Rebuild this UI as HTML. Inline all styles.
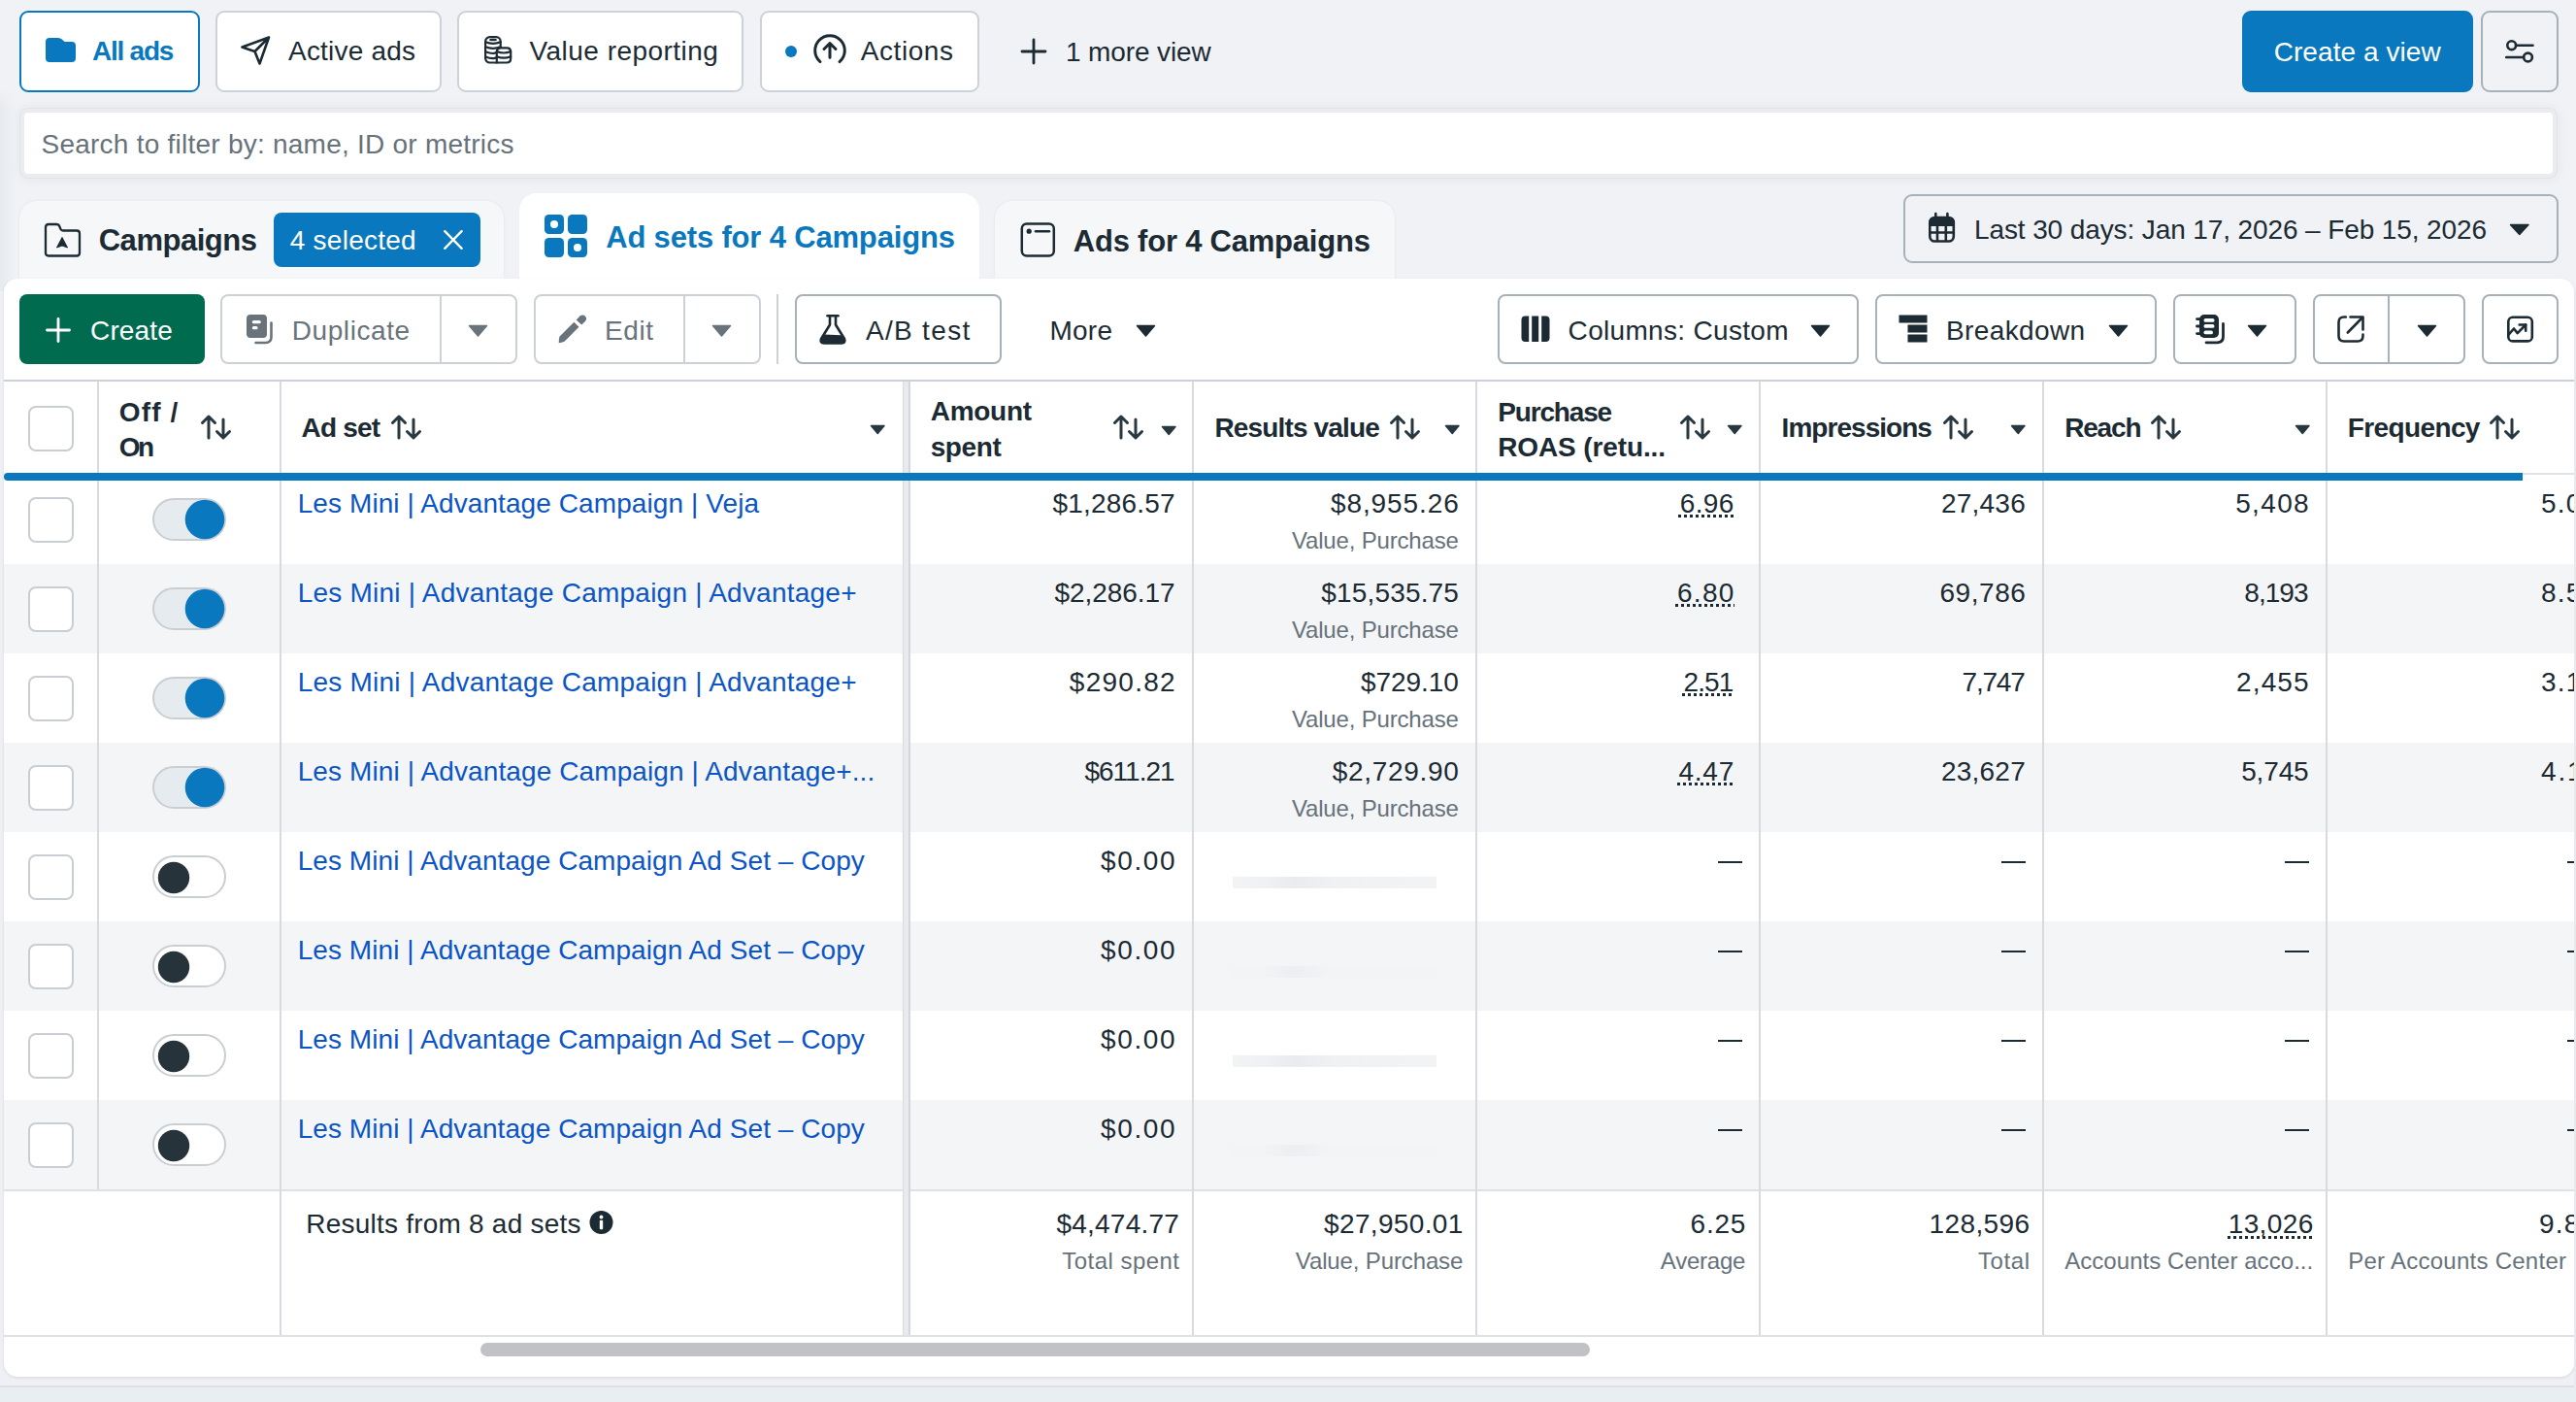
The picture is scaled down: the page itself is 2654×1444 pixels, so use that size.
<!DOCTYPE html><html><head><meta charset="utf-8"><style>
html,body{margin:0;padding:0;}
body{width:2654px;height:1444px;overflow:hidden;position:relative;background:#f0f2f5;font-family:"Liberation Sans", sans-serif;}
.t{position:absolute;white-space:nowrap;}
.b{position:absolute;box-sizing:border-box;}
svg.b{overflow:visible;}
</style></head><body>
<div class="b" style="left:0px;top:92px;width:16px;height:208px;background:linear-gradient(to right, rgba(40,60,80,0.045), rgba(40,60,80,0));-webkit-mask-image:linear-gradient(to bottom, transparent 0, #000 20px);"></div>
<div class="b" style="left:0px;top:1429px;width:2654px;height:15px;background:#e8eef1;"></div>
<div class="b" style="left:20px;top:11px;width:186px;height:84px;background:#fff;border:2.5px solid #0a78be;border-radius:9px;"></div>
<div class="b" style="left:222px;top:11px;width:233px;height:84px;background:#fff;border:2px solid #ccd2d8;border-radius:9px;"></div>
<div class="b" style="left:471px;top:11px;width:295px;height:84px;background:#fff;border:2px solid #ccd2d8;border-radius:9px;"></div>
<div class="b" style="left:783px;top:11px;width:226px;height:84px;background:#fff;border:2px solid #ccd2d8;border-radius:9px;"></div>
<svg class="b" style="left:46px;top:38px" width="33" height="27" viewBox="0 0 33 27"><path d="M1 5 Q1 1 5 1 H14 Q17 1 19 3.5 L20.5 5 H28 Q32 5 32 9 V22 Q32 26 28 26 H5 Q1 26 1 22 Z" fill="#0a78be"/></svg>
<div class="t" style="top:38.6px;font-size:28px;line-height:28px;color:#0a78be;font-weight:700;letter-spacing:-1.24px;left:95.0px;">All ads</div>
<svg class="b" style="left:246px;top:35px" width="34" height="34" viewBox="0 0 34 34"><path d="M3.5 13.5 L31 3.5 L21.5 30.5 L16.5 18 Z M16.5 18 L31 3.5" fill="none" stroke="#1c2b33" stroke-width="2.6" stroke-linejoin="round" stroke-linecap="round"/></svg>
<div class="t" style="top:38.6px;font-size:28px;line-height:28px;color:#1c2b33;letter-spacing:0.20px;left:297.0px;">Active ads</div>
<svg class="b" style="left:498px;top:36px" width="30" height="30" viewBox="0 0 30 30"><g fill="none" stroke="#1c2b33" stroke-width="2.2" stroke-linecap="round"><rect x="2.1" y="2.2" width="15.6" height="26.3" rx="4.5"/><path d="M2.1 7.3 Q9.9 10.3 17.7 7.3 M2.1 12.3 Q9.9 15.3 17.7 12.3 M2.1 17.3 Q9.9 20.3 13.8 18 M2.1 22.5 Q9.9 25.5 13.8 23.2"/></g><ellipse cx="10" cy="5" rx="4" ry="1.2" fill="#1c2b33"/><g fill="none" stroke="#1c2b33" stroke-width="2.2" stroke-linecap="round"><path d="M13.8 28.5 V17.5 Q13.8 13.3 18 13.3 H24 Q28.2 13.3 28.2 17.5 V24.3 Q28.2 28.5 24 28.5 Z" fill="#fff"/><path d="M13.8 17 Q21 20 28.2 17 M13.8 22.2 Q21 25.2 28.2 22.2"/></g></svg>
<div class="t" style="top:38.6px;font-size:28px;line-height:28px;color:#1c2b33;letter-spacing:0.47px;left:545.5px;">Value reporting</div>
<svg class="b" style="left:808px;top:46px" width="14" height="14" viewBox="0 0 14 14"><circle cx="7" cy="7" r="6" fill="#0a78be"/></svg>
<svg class="b" style="left:837px;top:33px" width="36" height="36" viewBox="0 0 36 36"><g fill="none" stroke="#1c2b33" stroke-width="3" stroke-linecap="round" stroke-linejoin="round"><path d="M8 30.6 A15.3 15.3 0 1 1 28 30.6"/><path d="M18 26.2 V11.5 M12 17.5 L18 11.5 L24 17.5"/></g></svg>
<div class="t" style="top:38.6px;font-size:28px;line-height:28px;color:#1c2b33;letter-spacing:0.58px;left:886.7px;">Actions</div>
<svg class="b" style="left:1050px;top:38px" width="30" height="30" viewBox="0 0 30 30"><path d="M15 3 V27 M3 15 H27" stroke="#1c2b33" stroke-width="2.8" stroke-linecap="round"/></svg>
<div class="t" style="top:40.3px;font-size:28px;line-height:28px;color:#1c2b33;letter-spacing:-0.13px;left:1098.0px;">1 more view</div>
<div class="b" style="left:2310px;top:11px;width:238px;height:84px;background:#0a78be;border-radius:9px;"></div>
<div class="t" style="top:40.2px;font-size:28px;line-height:28px;color:#fff;letter-spacing:0.07px;left:2342.7px;">Create a view</div>
<div class="b" style="left:2556px;top:11px;width:80px;height:84px;border:2px solid #a7b1ba;border-radius:9px;"></div>
<svg class="b" style="left:2578px;top:40px" width="36" height="28" viewBox="0 0 36 28"><g fill="none" stroke="#1c2b33" stroke-width="2.6" stroke-linecap="round"><circle cx="9.7" cy="6.7" r="4.4"/><path d="M14.1 6.7 H31.5"/><circle cx="26.5" cy="19" r="4.4"/><path d="M4.2 19 H22.1"/></g></svg>
<div class="b" style="left:21px;top:112px;width:2613px;height:71px;background:#fff;border:4px solid #eaecef;border-radius:8px;box-shadow:0 0 0 1px #e0e3e7, 0 0 12px 2px rgba(40,60,80,0.05);"></div>
<div class="t" style="top:134.5px;font-size:28px;line-height:28px;color:#67727b;letter-spacing:0.24px;left:42.5px;">Search to filter by: name, ID or metrics</div>
<div class="b" style="left:20px;top:207px;width:499px;height:80px;background:#f6f7f9;border-radius:18px 18px 0 0;box-shadow:0 0 3px rgba(0,0,0,0.07);"></div>
<div class="b" style="left:535px;top:199px;width:474px;height:91px;background:#fff;border-radius:18px 18px 0 0;"></div>
<div class="b" style="left:1025px;top:207px;width:412px;height:80px;background:#f6f7f9;border-radius:18px 18px 0 0;box-shadow:0 0 3px rgba(0,0,0,0.07);"></div>
<svg class="b" style="left:44px;top:228px" width="40" height="38" viewBox="0 0 40 38"><g fill="none" stroke="#1c2b33" stroke-width="2.3" stroke-linejoin="round"><path d="M3 6 Q3 3 6 3 H14.5 Q16 3 17 4.5 L18.5 8 Q19.2 9.5 21 9.5 H35 Q38 9.5 38 12.5 V32.5 Q38 35.5 35 35.5 H6 Q3 35.5 3 32.5 Z"/></g><path d="M20 16.5 L25.5 27 L20 25 L14.5 27 Z" fill="#1c2b33" stroke="#1c2b33" stroke-width="1" stroke-linejoin="round"/></svg>
<div class="t" style="top:232.4px;font-size:31px;line-height:31px;color:#1c2b33;font-weight:700;letter-spacing:-0.47px;left:101.7px;">Campaigns</div>
<div class="b" style="left:282px;top:219px;width:213px;height:56px;background:#0a78be;border-radius:8px;"></div>
<div class="t" style="top:234.3px;font-size:28px;line-height:28px;color:#fff;letter-spacing:0.26px;left:298.7px;">4 selected</div>
<svg class="b" style="left:455px;top:236px" width="24" height="22" viewBox="0 0 24 22"><path d="M3.3 2.2 L20.6 19.8 M20.6 2.2 L3.3 19.8" stroke="#fff" stroke-width="2.4" stroke-linecap="round"/></svg>
<svg class="b" style="left:560px;top:220px" width="46" height="46" viewBox="0 0 46 46"><g fill="#0a78be"><rect x="1" y="1" width="20" height="20" rx="4.5"/><rect x="25" y="1" width="20" height="20" rx="4.5"/><rect x="1" y="25" width="20" height="20" rx="4.5"/><rect x="25" y="25" width="20" height="20" rx="4.5"/></g><circle cx="11" cy="11" r="4" fill="#fff"/><circle cx="35" cy="35" r="4" fill="#fff"/></svg>
<div class="t" style="top:228.6px;font-size:31px;line-height:31px;color:#0a78be;font-weight:700;letter-spacing:-0.17px;left:624.2px;">Ad sets for 4 Campaigns</div>
<svg class="b" style="left:1050px;top:228px" width="38" height="38" viewBox="0 0 38 38"><g fill="none" stroke="#1c2b33" stroke-width="2.5"><rect x="2.8" y="2.5" width="33" height="33" rx="5"/><path d="M17 10.2 H31" stroke-linecap="round"/></g><circle cx="10.2" cy="10.2" r="2.6" fill="#1c2b33"/></svg>
<div class="t" style="top:232.8px;font-size:31px;line-height:31px;color:#1c2b33;font-weight:700;letter-spacing:-0.22px;left:1105.8px;">Ads for 4 Campaigns</div>
<div class="b" style="left:1961px;top:200px;width:675px;height:71px;border:2px solid #a7b1ba;border-radius:9px;"></div>
<svg class="b" style="left:1985px;top:218px" width="30" height="32" viewBox="0 0 30 32"><g fill="none" stroke="#1c2b33" stroke-width="2.6" stroke-linecap="round"><rect x="3.3" y="6" width="24.5" height="24.5" rx="5"/><path d="M9.3 2 V6 M21.4 2 V6"/><path d="M3.3 13.8 H27.8 M3.3 21.5 H27.8 M11 13.8 V30.5 M19.8 13.8 V30.5" stroke-linecap="butt"/></g><rect x="3.3" y="6" width="24.5" height="7.8" fill="#1c2b33" rx="3"/></svg>
<div class="t" style="top:222.8px;font-size:28px;line-height:28px;color:#1c2b33;letter-spacing:-0.11px;left:2034.0px;">Last 30 days: Jan 17, 2026 – Feb 15, 2026</div>
<svg class="b" style="left:2584.75px;top:230.3px" width="21.5" height="13" viewBox="0 0 21.5 13"><path d="M1.5 1.5 H20.0 L10.75 11.5 Z" fill="#1c2b33" stroke="#1c2b33" stroke-width="1.5" stroke-linejoin="round"/></svg>
<div class="b" style="left:-20px;top:300px;width:2694px;height:1129px;background:#eef0f3;border-bottom:2px solid #dde0e4;border-radius:0 0 16px 16px;"></div>
<div class="b" style="left:4px;top:287px;width:2648px;height:1131px;background:#fff;border-radius:14px;box-shadow:0 1px 3px rgba(0,0,0,0.10);"></div>
<div class="b" style="left:20px;top:303px;width:191px;height:72px;background:#006b4e;border-radius:8px;"></div>
<svg class="b" style="left:46px;top:326px" width="28" height="28" viewBox="0 0 28 28"><path d="M14 2.5 V25.5 M2.5 14 H25.5" stroke="#fff" stroke-width="2.8" stroke-linecap="round"/></svg>
<div class="t" style="top:326.5px;font-size:28px;line-height:28px;color:#fff;letter-spacing:0.16px;left:93.0px;">Create</div>
<div class="b" style="left:227px;top:303px;width:306px;height:72px;border:2px solid #ccd1d7;border-radius:8px;background:#fff;"></div>
<div class="b" style="left:453px;top:303px;width:2px;height:72px;background:#ccd1d7;"></div>
<svg class="b" style="left:252px;top:322px" width="32" height="34" viewBox="0 0 32 34"><rect x="2" y="2" width="21" height="24" rx="4" fill="#69737b"/><rect x="7.8" y="8" width="9" height="3.3" rx="1.6" fill="#fff"/><rect x="7.8" y="14" width="5.8" height="3.3" rx="1.6" fill="#fff"/><path d="M27.5 10.5 V25 Q27.5 31 21.5 31 H11.5" fill="none" stroke="#69737b" stroke-width="2.6" stroke-linecap="round"/></svg>
<div class="t" style="top:326.5px;font-size:28px;line-height:28px;color:#69737b;letter-spacing:0.59px;left:300.7px;">Duplicate</div>
<svg class="b" style="left:482.1px;top:333.6px" width="21" height="13.5" viewBox="0 0 21 13.5"><path d="M1.5 1.5 H19.5 L10.5 12.0 Z" fill="#69737b" stroke="#69737b" stroke-width="1.5" stroke-linejoin="round"/></svg>
<div class="b" style="left:550px;top:303px;width:234px;height:72px;border:2px solid #ccd1d7;border-radius:8px;background:#fff;"></div>
<div class="b" style="left:704px;top:303px;width:2px;height:72px;background:#ccd1d7;"></div>
<svg class="b" style="left:573px;top:323px" width="34" height="34" viewBox="0 0 34 34"><path d="M18.4 8.7 L23.5 13.8 L8.5 28.8 Q5.5 30 2.7 30.2 Q2.6 27 3.4 23.7 Z" fill="#69737b"/><path d="M20.7 6.4 L24.5 2.6 Q27.5 0.3 30 2.8 Q32.3 5.3 29.9 7.9 L26.2 11.6 Z" fill="#69737b"/></svg>
<div class="t" style="top:326.5px;font-size:28px;line-height:28px;color:#69737b;letter-spacing:0.67px;left:622.9px;">Edit</div>
<svg class="b" style="left:733.3px;top:333.6px" width="21" height="13.5" viewBox="0 0 21 13.5"><path d="M1.5 1.5 H19.5 L10.5 12.0 Z" fill="#69737b" stroke="#69737b" stroke-width="1.5" stroke-linejoin="round"/></svg>
<div class="b" style="left:800px;top:303px;width:2px;height:72px;background:#ccd1d7;"></div>
<div class="b" style="left:819px;top:303px;width:213px;height:72px;border:2px solid #a7b1ba;border-radius:8px;background:#fff;"></div>
<svg class="b" style="left:842px;top:322px" width="32" height="34" viewBox="0 0 32 34"><g fill="none" stroke="#1c2b33" stroke-width="2.6" stroke-linecap="round" stroke-linejoin="round"><path d="M10.5 3.3 H21.5"/><path d="M13 3.5 V12.5 L4 27 Q2.5 31.5 7 31.5 H25 Q29.5 31.5 28 27 L19 12.5 V3.5"/></g><path d="M7.5 22.5 L24.5 23.2 L28.5 28.5 Q29 31.5 25 31.5 H7 Q3 31.5 3.8 28 Z" fill="#1c2b33"/></svg>
<div class="t" style="top:326.5px;font-size:28px;line-height:28px;color:#1c2b33;letter-spacing:1.33px;left:891.9px;">A/B test</div>
<div class="t" style="top:326.5px;font-size:28px;line-height:28px;color:#1c2b33;letter-spacing:0.19px;left:1081.6px;">More</div>
<svg class="b" style="left:1169.7px;top:333.6px" width="21" height="13.5" viewBox="0 0 21 13.5"><path d="M1.5 1.5 H19.5 L10.5 12.0 Z" fill="#1c2b33" stroke="#1c2b33" stroke-width="1.5" stroke-linejoin="round"/></svg>
<div class="b" style="left:1543px;top:303px;width:372px;height:72px;border:2px solid #a7b1ba;border-radius:8px;background:#fff;"></div>
<svg class="b" style="left:1566px;top:324px" width="32" height="30" viewBox="0 0 32 30"><rect x="1.5" y="1.5" width="29" height="26.5" rx="4" fill="#1c2b33"/><rect x="9.2" y="1" width="3" height="28" fill="#fff"/><rect x="19.2" y="1" width="3" height="28" fill="#fff"/></svg>
<div class="t" style="top:326.5px;font-size:28px;line-height:28px;color:#1c2b33;letter-spacing:0.32px;left:1615.6px;">Columns: Custom</div>
<svg class="b" style="left:1864.6px;top:333.6px" width="21" height="13.5" viewBox="0 0 21 13.5"><path d="M1.5 1.5 H19.5 L10.5 12.0 Z" fill="#1c2b33" stroke="#1c2b33" stroke-width="1.5" stroke-linejoin="round"/></svg>
<div class="b" style="left:1932px;top:303px;width:290px;height:72px;border:2px solid #a7b1ba;border-radius:8px;background:#fff;"></div>
<svg class="b" style="left:1956px;top:324px" width="30" height="30" viewBox="0 0 30 30"><g fill="#1c2b33"><rect x="0.5" y="0.5" width="29" height="8"/><rect x="9.5" y="10.5" width="20" height="8"/><rect x="9.5" y="20.5" width="20" height="8"/></g></svg>
<div class="t" style="top:326.5px;font-size:28px;line-height:28px;color:#1c2b33;letter-spacing:0.38px;left:2005.0px;">Breakdown</div>
<svg class="b" style="left:2171.7px;top:333.6px" width="21" height="13.5" viewBox="0 0 21 13.5"><path d="M1.5 1.5 H19.5 L10.5 12.0 Z" fill="#1c2b33" stroke="#1c2b33" stroke-width="1.5" stroke-linejoin="round"/></svg>
<div class="b" style="left:2239px;top:303px;width:127px;height:72px;border:2px solid #a7b1ba;border-radius:8px;background:#fff;"></div>
<svg class="b" style="left:2261px;top:322px" width="34" height="34" viewBox="0 0 34 34"><rect x="5" y="2" width="20" height="24" rx="5" fill="#1c2b33"/><g fill="#fff"><rect x="9.5" y="6" width="11" height="3.8" rx="1.9"/><rect x="9.5" y="12" width="11" height="3.8" rx="1.9"/><rect x="9.5" y="18.5" width="9.5" height="3.8" rx="1.9"/></g><g stroke="#1c2b33" stroke-width="2.8" stroke-linecap="round" fill="none"><path d="M2.5 6.6 H6 M2.5 14 H6 M2.5 21.6 H6"/><path d="M29.5 11.5 V24.5 Q29.5 30.8 23.2 30.8 H12"/></g></svg>
<svg class="b" style="left:2315.4px;top:334.2px" width="21" height="13.5" viewBox="0 0 21 13.5"><path d="M1.5 1.5 H19.5 L10.5 12.0 Z" fill="#1c2b33" stroke="#1c2b33" stroke-width="1.5" stroke-linejoin="round"/></svg>
<div class="b" style="left:2383px;top:303px;width:157px;height:72px;border:2px solid #a7b1ba;border-radius:8px;background:#fff;"></div>
<div class="b" style="left:2460px;top:303px;width:2px;height:72px;background:#a7b1ba;"></div>
<svg class="b" style="left:2406px;top:323px" width="32" height="32" viewBox="0 0 32 32"><g fill="none" stroke="#1c2b33" stroke-width="2.6" stroke-linecap="round" stroke-linejoin="round"><path d="M10.8 3.5 H9 Q3.5 3.5 3.5 9 V23 Q3.5 28.5 9 28.5 H23 Q28.5 28.5 28.5 23 V21.5"/><path d="M15.5 3.5 H28.5 V16.5"/><path d="M12.8 19.5 L27.5 4.5"/></g></svg>
<svg class="b" style="left:2489.5px;top:334.2px" width="21" height="13.5" viewBox="0 0 21 13.5"><path d="M1.5 1.5 H19.5 L10.5 12.0 Z" fill="#1c2b33" stroke="#1c2b33" stroke-width="1.5" stroke-linejoin="round"/></svg>
<div class="b" style="left:2557px;top:303px;width:79px;height:72px;border:2px solid #a7b1ba;border-radius:8px;background:#fff;"></div>
<svg class="b" style="left:2580px;top:323px" width="32" height="32" viewBox="0 0 32 32"><g fill="none" stroke="#1c2b33" stroke-width="2.6" stroke-linecap="round" stroke-linejoin="round"><rect x="4.3" y="3.8" width="24.5" height="24.6" rx="4.5"/><path d="M5 21.2 L10 15.5 L13.7 20.1 L22.2 11.5"/><path d="M15.7 11.5 H22.2 V17.8"/></g></svg>
<div class="b" style="left:4px;top:391px;width:2648px;height:2px;background:#cdd1d6;"></div>
<div class="b" style="left:4px;top:581px;width:2648px;height:92px;background:#f4f5f7;"></div>
<div class="b" style="left:4px;top:765px;width:2648px;height:92px;background:#f4f5f7;"></div>
<div class="b" style="left:4px;top:949px;width:2648px;height:92px;background:#f4f5f7;"></div>
<div class="b" style="left:4px;top:1133px;width:2648px;height:92px;background:#f4f5f7;"></div>
<div class="b" style="left:4px;top:1225px;width:2648px;height:2px;background:#dfe2e5;"></div>
<div class="b" style="left:4px;top:1375px;width:2648px;height:2px;background:#dfe2e5;"></div>
<div class="b" style="left:100px;top:393px;width:2px;height:832px;background:#d7dadf;"></div>
<div class="b" style="left:288px;top:393px;width:2px;height:982px;background:#d7dadf;"></div>
<div class="b" style="left:1228px;top:393px;width:2px;height:982px;background:#d7dadf;"></div>
<div class="b" style="left:1520px;top:393px;width:2px;height:982px;background:#d7dadf;"></div>
<div class="b" style="left:1812px;top:393px;width:2px;height:982px;background:#d7dadf;"></div>
<div class="b" style="left:2104px;top:393px;width:2px;height:982px;background:#d7dadf;"></div>
<div class="b" style="left:2396px;top:393px;width:2px;height:982px;background:#d7dadf;"></div>
<div class="b" style="left:930px;top:393px;width:8px;height:982px;background:#e8eaed;"></div>
<div class="b" style="left:930px;top:393px;width:1px;height:982px;background:#d7dadf;"></div>
<div class="b" style="left:936px;top:393px;width:2px;height:982px;background:#d3d6da;"></div>
<div class="b" style="left:2599px;top:487px;width:53px;height:2px;background:#dfe2e6;"></div>
<div class="b" style="left:4px;top:487px;width:2595px;height:8px;background:#0a78be;border-radius:4px 0 0 4px;"></div>
<div class="b" style="left:28.5px;top:417.5px;width:47.0px;height:47.0px;background:#fff;border:2px solid #c9ced4;border-radius:8px;"></div>
<div class="t" style="top:410.8px;font-size:28px;line-height:28px;color:#1c2b33;font-weight:700;letter-spacing:1.18px;left:122.7px;">Off /</div>
<div class="t" style="top:447.1px;font-size:28px;line-height:28px;color:#1c2b33;font-weight:700;letter-spacing:-2.42px;left:122.7px;">On</div>
<svg class="b" style="left:207px;top:427px" width="32" height="26" viewBox="0 0 32 26"><g fill="none" stroke="#283841" stroke-width="3" stroke-linecap="round" stroke-linejoin="round"><path d="M8 24 V2 M1.5 8.5 L8 2 L14.5 8.5"/><path d="M23 5 V24 M16.5 17.5 L23 24 L29.5 17.5"/></g></svg>
<div class="t" style="top:427.3px;font-size:28px;line-height:28px;color:#1c2b33;font-weight:700;letter-spacing:-0.83px;left:310.6px;">Ad set</div>
<svg class="b" style="left:402.5px;top:427px" width="32" height="26" viewBox="0 0 32 26"><g fill="none" stroke="#283841" stroke-width="3" stroke-linecap="round" stroke-linejoin="round"><path d="M8 24 V2 M1.5 8.5 L8 2 L14.5 8.5"/><path d="M23 5 V24 M16.5 17.5 L23 24 L29.5 17.5"/></g></svg>
<svg class="b" style="left:895.55px;top:436.8px" width="16.5" height="11" viewBox="0 0 16.5 11"><path d="M1.5 1.5 H15.0 L8.25 9.5 Z" fill="#283841" stroke="#283841" stroke-width="1.5" stroke-linejoin="round"/></svg>
<div class="t" style="top:410.2px;font-size:28px;line-height:28px;color:#1c2b33;font-weight:700;letter-spacing:-0.28px;left:958.7px;">Amount</div>
<div class="t" style="top:446.7px;font-size:28px;line-height:28px;color:#1c2b33;font-weight:700;letter-spacing:-0.41px;left:958.7px;">spent</div>
<svg class="b" style="left:1146.5px;top:427px" width="32" height="26" viewBox="0 0 32 26"><g fill="none" stroke="#283841" stroke-width="3" stroke-linecap="round" stroke-linejoin="round"><path d="M8 24 V2 M1.5 8.5 L8 2 L14.5 8.5"/><path d="M23 5 V24 M16.5 17.5 L23 24 L29.5 17.5"/></g></svg>
<svg class="b" style="left:1195.75px;top:437.5px" width="16.5" height="11" viewBox="0 0 16.5 11"><path d="M1.5 1.5 H15.0 L8.25 9.5 Z" fill="#283841" stroke="#283841" stroke-width="1.5" stroke-linejoin="round"/></svg>
<div class="t" style="top:427.1px;font-size:28px;line-height:28px;color:#1c2b33;font-weight:700;letter-spacing:-0.86px;left:1251.5px;">Results value</div>
<svg class="b" style="left:1431.5px;top:427px" width="32" height="26" viewBox="0 0 32 26"><g fill="none" stroke="#283841" stroke-width="3" stroke-linecap="round" stroke-linejoin="round"><path d="M8 24 V2 M1.5 8.5 L8 2 L14.5 8.5"/><path d="M23 5 V24 M16.5 17.5 L23 24 L29.5 17.5"/></g></svg>
<svg class="b" style="left:1487.65px;top:436.8px" width="16.5" height="11" viewBox="0 0 16.5 11"><path d="M1.5 1.5 H15.0 L8.25 9.5 Z" fill="#283841" stroke="#283841" stroke-width="1.5" stroke-linejoin="round"/></svg>
<div class="t" style="top:410.6px;font-size:28px;line-height:28px;color:#1c2b33;font-weight:700;letter-spacing:-1.16px;left:1543.2px;">Purchase</div>
<div class="t" style="top:447.0px;font-size:28px;line-height:28px;color:#1c2b33;font-weight:700;letter-spacing:-0.12px;left:1543.2px;">ROAS (retu...</div>
<svg class="b" style="left:1731px;top:427px" width="32" height="26" viewBox="0 0 32 26"><g fill="none" stroke="#283841" stroke-width="3" stroke-linecap="round" stroke-linejoin="round"><path d="M8 24 V2 M1.5 8.5 L8 2 L14.5 8.5"/><path d="M23 5 V24 M16.5 17.5 L23 24 L29.5 17.5"/></g></svg>
<svg class="b" style="left:1779.15px;top:436.8px" width="16.5" height="11" viewBox="0 0 16.5 11"><path d="M1.5 1.5 H15.0 L8.25 9.5 Z" fill="#283841" stroke="#283841" stroke-width="1.5" stroke-linejoin="round"/></svg>
<div class="t" style="top:427.1px;font-size:28px;line-height:28px;color:#1c2b33;font-weight:700;letter-spacing:-0.96px;left:1835.6px;">Impressions</div>
<svg class="b" style="left:2001.5px;top:427px" width="32" height="26" viewBox="0 0 32 26"><g fill="none" stroke="#283841" stroke-width="3" stroke-linecap="round" stroke-linejoin="round"><path d="M8 24 V2 M1.5 8.5 L8 2 L14.5 8.5"/><path d="M23 5 V24 M16.5 17.5 L23 24 L29.5 17.5"/></g></svg>
<svg class="b" style="left:2071.25px;top:436.8px" width="16.5" height="11" viewBox="0 0 16.5 11"><path d="M1.5 1.5 H15.0 L8.25 9.5 Z" fill="#283841" stroke="#283841" stroke-width="1.5" stroke-linejoin="round"/></svg>
<div class="t" style="top:427.1px;font-size:28px;line-height:28px;color:#1c2b33;font-weight:700;letter-spacing:-1.18px;left:2127.2px;">Reach</div>
<svg class="b" style="left:2216px;top:427px" width="32" height="26" viewBox="0 0 32 26"><g fill="none" stroke="#283841" stroke-width="3" stroke-linecap="round" stroke-linejoin="round"><path d="M8 24 V2 M1.5 8.5 L8 2 L14.5 8.5"/><path d="M23 5 V24 M16.5 17.5 L23 24 L29.5 17.5"/></g></svg>
<svg class="b" style="left:2363.75px;top:436.8px" width="16.5" height="11" viewBox="0 0 16.5 11"><path d="M1.5 1.5 H15.0 L8.25 9.5 Z" fill="#283841" stroke="#283841" stroke-width="1.5" stroke-linejoin="round"/></svg>
<div class="t" style="top:427.1px;font-size:28px;line-height:28px;color:#1c2b33;font-weight:700;letter-spacing:-0.62px;left:2418.8px;">Frequency</div>
<svg class="b" style="left:2565px;top:427px" width="32" height="26" viewBox="0 0 32 26"><g fill="none" stroke="#283841" stroke-width="3" stroke-linecap="round" stroke-linejoin="round"><path d="M8 24 V2 M1.5 8.5 L8 2 L14.5 8.5"/><path d="M23 5 V24 M16.5 17.5 L23 24 L29.5 17.5"/></g></svg>
<div class="b" style="left:28.5px;top:511.5px;width:47.0px;height:47.0px;background:#fff;border:2px solid #c9ced4;border-radius:8px;"></div>
<div class="b" style="left:157px;top:513px;width:76px;height:44px;background:#e6ebef;border:2px solid #c9ced3;border-radius:22px;"></div>
<svg class="b" style="left:190px;top:514px" width="42" height="42" viewBox="0 0 42 42"><circle cx="21" cy="21" r="20.3" fill="#0a78be"/></svg>
<div class="t" style="top:504.8px;font-size:28px;line-height:28px;color:#0b55c6;letter-spacing:0.09px;left:306.7px;">Les Mini | Advantage Campaign | Veja</div>
<div class="t" style="top:504.8px;font-size:28px;line-height:28px;color:#1c2b33;letter-spacing:0.20px;right:1443.2px;">$1,286.57</div>
<div class="t" style="top:504.8px;font-size:28px;line-height:28px;color:#1c2b33;letter-spacing:0.93px;right:1150.2px;">$8,955.26</div>
<div class="t" style="top:545.1px;font-size:24px;line-height:24px;color:#67727b;letter-spacing:-0.17px;right:1151.3px;">Value, Purchase</div>
<div class="t" style="top:504.8px;font-size:28px;line-height:28px;color:#1c2b33;letter-spacing:0.31px;right:867.4px;">6.96</div>
<div class="b" style="left:1729px;top:530px;width:58px;height:3px;background-image:linear-gradient(to right,#1c2b33 50%,transparent 50%);background-size:6px 3px;"></div>
<div class="t" style="top:504.8px;font-size:28px;line-height:28px;color:#1c2b33;letter-spacing:0.24px;right:567.0px;">27,436</div>
<div class="t" style="top:504.8px;font-size:28px;line-height:28px;color:#1c2b33;letter-spacing:1.36px;right:274.0px;">5,408</div>
<div class="t" style="top:504.8px;font-size:28px;line-height:28px;color:#1c2b33;letter-spacing:1.18px;right:-23.2px;">5.07</div>
<div class="b" style="left:28.5px;top:603.5px;width:47.0px;height:47.0px;background:#fff;border:2px solid #c9ced4;border-radius:8px;"></div>
<div class="b" style="left:157px;top:605px;width:76px;height:44px;background:#e6ebef;border:2px solid #c9ced3;border-radius:22px;"></div>
<svg class="b" style="left:190px;top:606px" width="42" height="42" viewBox="0 0 42 42"><circle cx="21" cy="21" r="20.3" fill="#0a78be"/></svg>
<div class="t" style="top:596.8px;font-size:28px;line-height:28px;color:#0b55c6;letter-spacing:0.23px;left:306.7px;">Les Mini | Advantage Campaign | Advantage+</div>
<div class="t" style="top:596.8px;font-size:28px;line-height:28px;color:#1c2b33;letter-spacing:-0.04px;right:1443.4px;">$2,286.17</div>
<div class="t" style="top:596.8px;font-size:28px;line-height:28px;color:#1c2b33;letter-spacing:0.17px;right:1150.9px;">$15,535.75</div>
<div class="t" style="top:637.1px;font-size:24px;line-height:24px;color:#67727b;letter-spacing:-0.17px;right:1151.3px;">Value, Purchase</div>
<div class="t" style="top:596.8px;font-size:28px;line-height:28px;color:#1c2b33;letter-spacing:1.28px;right:866.4px;">6.80</div>
<div class="b" style="left:1726px;top:622px;width:61px;height:3px;background-image:linear-gradient(to right,#1c2b33 50%,transparent 50%);background-size:6px 3px;"></div>
<div class="t" style="top:596.8px;font-size:28px;line-height:28px;color:#1c2b33;letter-spacing:0.56px;right:566.6px;">69,786</div>
<div class="t" style="top:596.8px;font-size:28px;line-height:28px;color:#1c2b33;letter-spacing:-0.96px;right:276.4px;">8,193</div>
<div class="t" style="top:596.8px;font-size:28px;line-height:28px;color:#1c2b33;letter-spacing:1.18px;right:-23.2px;">8.52</div>
<div class="b" style="left:28.5px;top:695.5px;width:47.0px;height:47.0px;background:#fff;border:2px solid #c9ced4;border-radius:8px;"></div>
<div class="b" style="left:157px;top:697px;width:76px;height:44px;background:#e6ebef;border:2px solid #c9ced3;border-radius:22px;"></div>
<svg class="b" style="left:190px;top:698px" width="42" height="42" viewBox="0 0 42 42"><circle cx="21" cy="21" r="20.3" fill="#0a78be"/></svg>
<div class="t" style="top:688.8px;font-size:28px;line-height:28px;color:#0b55c6;letter-spacing:0.23px;left:306.7px;">Les Mini | Advantage Campaign | Advantage+</div>
<div class="t" style="top:688.8px;font-size:28px;line-height:28px;color:#1c2b33;letter-spacing:1.25px;right:1442.2px;">$290.82</div>
<div class="t" style="top:688.8px;font-size:28px;line-height:28px;color:#1c2b33;letter-spacing:-0.04px;right:1151.1px;">$729.10</div>
<div class="t" style="top:729.1px;font-size:24px;line-height:24px;color:#67727b;letter-spacing:-0.17px;right:1151.3px;">Value, Purchase</div>
<div class="t" style="top:688.8px;font-size:28px;line-height:28px;color:#1c2b33;letter-spacing:-0.92px;right:868.6px;">2.51</div>
<div class="b" style="left:1733px;top:714px;width:54px;height:3px;background-image:linear-gradient(to right,#1c2b33 50%,transparent 50%);background-size:6px 3px;"></div>
<div class="t" style="top:688.8px;font-size:28px;line-height:28px;color:#1c2b33;letter-spacing:-1.21px;right:568.4px;">7,747</div>
<div class="t" style="top:688.8px;font-size:28px;line-height:28px;color:#1c2b33;letter-spacing:1.11px;right:274.3px;">2,455</div>
<div class="t" style="top:688.8px;font-size:28px;line-height:28px;color:#1c2b33;letter-spacing:1.18px;right:-23.2px;">3.16</div>
<div class="b" style="left:28.5px;top:787.5px;width:47.0px;height:47.0px;background:#fff;border:2px solid #c9ced4;border-radius:8px;"></div>
<div class="b" style="left:157px;top:789px;width:76px;height:44px;background:#e6ebef;border:2px solid #c9ced3;border-radius:22px;"></div>
<svg class="b" style="left:190px;top:790px" width="42" height="42" viewBox="0 0 42 42"><circle cx="21" cy="21" r="20.3" fill="#0a78be"/></svg>
<div class="t" style="top:780.8px;font-size:28px;line-height:28px;color:#0b55c6;letter-spacing:0.11px;left:306.7px;">Les Mini | Advantage Campaign | Advantage+...</div>
<div class="t" style="top:780.8px;font-size:28px;line-height:28px;color:#1c2b33;letter-spacing:-0.99px;right:1444.4px;">$611.21</div>
<div class="t" style="top:780.8px;font-size:28px;line-height:28px;color:#1c2b33;letter-spacing:0.69px;right:1150.4px;">$2,729.90</div>
<div class="t" style="top:821.1px;font-size:24px;line-height:24px;color:#67727b;letter-spacing:-0.17px;right:1151.3px;">Value, Purchase</div>
<div class="t" style="top:780.8px;font-size:28px;line-height:28px;color:#1c2b33;letter-spacing:0.75px;right:867.0px;">4.47</div>
<div class="b" style="left:1728px;top:806px;width:59px;height:3px;background-image:linear-gradient(to right,#1c2b33 50%,transparent 50%);background-size:6px 3px;"></div>
<div class="t" style="top:780.8px;font-size:28px;line-height:28px;color:#1c2b33;letter-spacing:0.24px;right:567.0px;">23,627</div>
<div class="t" style="top:780.8px;font-size:28px;line-height:28px;color:#1c2b33;letter-spacing:-0.14px;right:275.5px;">5,745</div>
<div class="t" style="top:780.8px;font-size:28px;line-height:28px;color:#1c2b33;letter-spacing:1.88px;right:-23.9px;">4.11</div>
<div class="b" style="left:28.5px;top:879.5px;width:47.0px;height:47.0px;background:#fff;border:2px solid #c9ced4;border-radius:8px;"></div>
<div class="b" style="left:157px;top:881px;width:76px;height:44px;background:#fff;border:2px solid #c9ced3;border-radius:22px;"></div>
<svg class="b" style="left:162px;top:886.5px" width="34" height="34" viewBox="0 0 34 34"><circle cx="17" cy="17" r="16.2" fill="#27333a"/></svg>
<div class="t" style="top:872.8px;font-size:28px;line-height:28px;color:#0b55c6;letter-spacing:0.06px;left:306.7px;">Les Mini | Advantage Campaign Ad Set – Copy</div>
<div class="t" style="top:872.8px;font-size:28px;line-height:28px;color:#1c2b33;letter-spacing:1.61px;right:1441.8px;">$0.00</div>
<div class="b" style="left:1270px;top:903px;width:210px;height:12px;background:linear-gradient(to right,#f2f3f5 0%,#f0f1f4 15%,#e9ebef 30%,#eff1f3 50%,#f2f3f5 100%);"></div>
<div class="b" style="left:1769.6px;top:886.5px;width:25.200000000000045px;height:2.5px;background:#1c2b33;"></div>
<div class="b" style="left:2062px;top:886.5px;width:24.800000000000182px;height:2.5px;background:#1c2b33;"></div>
<div class="b" style="left:2353.7px;top:886.5px;width:24.90000000000009px;height:2.5px;background:#1c2b33;"></div>
<div class="b" style="left:2645px;top:886.5px;width:25px;height:2.5px;background:#1c2b33;"></div>
<div class="b" style="left:28.5px;top:971.5px;width:47.0px;height:47.0px;background:#fff;border:2px solid #c9ced4;border-radius:8px;"></div>
<div class="b" style="left:157px;top:973px;width:76px;height:44px;background:#fff;border:2px solid #c9ced3;border-radius:22px;"></div>
<svg class="b" style="left:162px;top:978.5px" width="34" height="34" viewBox="0 0 34 34"><circle cx="17" cy="17" r="16.2" fill="#27333a"/></svg>
<div class="t" style="top:964.8px;font-size:28px;line-height:28px;color:#0b55c6;letter-spacing:0.06px;left:306.7px;">Les Mini | Advantage Campaign Ad Set – Copy</div>
<div class="t" style="top:964.8px;font-size:28px;line-height:28px;color:#1c2b33;letter-spacing:1.61px;right:1441.8px;">$0.00</div>
<div class="b" style="left:1270px;top:995px;width:210px;height:12px;background:linear-gradient(to right,#f3f4f6 0%,#f3f4f6 14%,#eceef1 30%,#f3f4f6 48%,#f3f4f6 100%);"></div>
<div class="b" style="left:1769.6px;top:978.5px;width:25.200000000000045px;height:2.5px;background:#1c2b33;"></div>
<div class="b" style="left:2062px;top:978.5px;width:24.800000000000182px;height:2.5px;background:#1c2b33;"></div>
<div class="b" style="left:2353.7px;top:978.5px;width:24.90000000000009px;height:2.5px;background:#1c2b33;"></div>
<div class="b" style="left:2645px;top:978.5px;width:25px;height:2.5px;background:#1c2b33;"></div>
<div class="b" style="left:28.5px;top:1063.5px;width:47.0px;height:47.0px;background:#fff;border:2px solid #c9ced4;border-radius:8px;"></div>
<div class="b" style="left:157px;top:1065px;width:76px;height:44px;background:#fff;border:2px solid #c9ced3;border-radius:22px;"></div>
<svg class="b" style="left:162px;top:1070.5px" width="34" height="34" viewBox="0 0 34 34"><circle cx="17" cy="17" r="16.2" fill="#27333a"/></svg>
<div class="t" style="top:1056.8px;font-size:28px;line-height:28px;color:#0b55c6;letter-spacing:0.06px;left:306.7px;">Les Mini | Advantage Campaign Ad Set – Copy</div>
<div class="t" style="top:1056.8px;font-size:28px;line-height:28px;color:#1c2b33;letter-spacing:1.61px;right:1441.8px;">$0.00</div>
<div class="b" style="left:1270px;top:1087px;width:210px;height:12px;background:linear-gradient(to right,#f2f3f5 0%,#f0f1f4 15%,#e9ebef 30%,#eff1f3 50%,#f2f3f5 100%);"></div>
<div class="b" style="left:1769.6px;top:1070.5px;width:25.200000000000045px;height:2.5px;background:#1c2b33;"></div>
<div class="b" style="left:2062px;top:1070.5px;width:24.800000000000182px;height:2.5px;background:#1c2b33;"></div>
<div class="b" style="left:2353.7px;top:1070.5px;width:24.90000000000009px;height:2.5px;background:#1c2b33;"></div>
<div class="b" style="left:2645px;top:1070.5px;width:25px;height:2.5px;background:#1c2b33;"></div>
<div class="b" style="left:28.5px;top:1155.5px;width:47.0px;height:47.0px;background:#fff;border:2px solid #c9ced4;border-radius:8px;"></div>
<div class="b" style="left:157px;top:1157px;width:76px;height:44px;background:#fff;border:2px solid #c9ced3;border-radius:22px;"></div>
<svg class="b" style="left:162px;top:1162.5px" width="34" height="34" viewBox="0 0 34 34"><circle cx="17" cy="17" r="16.2" fill="#27333a"/></svg>
<div class="t" style="top:1148.8px;font-size:28px;line-height:28px;color:#0b55c6;letter-spacing:0.06px;left:306.7px;">Les Mini | Advantage Campaign Ad Set – Copy</div>
<div class="t" style="top:1148.8px;font-size:28px;line-height:28px;color:#1c2b33;letter-spacing:1.61px;right:1441.8px;">$0.00</div>
<div class="b" style="left:1270px;top:1179px;width:210px;height:12px;background:linear-gradient(to right,#f3f4f6 0%,#f3f4f6 14%,#eceef1 30%,#f3f4f6 48%,#f3f4f6 100%);"></div>
<div class="b" style="left:1769.6px;top:1162.5px;width:25.200000000000045px;height:2.5px;background:#1c2b33;"></div>
<div class="b" style="left:2062px;top:1162.5px;width:24.800000000000182px;height:2.5px;background:#1c2b33;"></div>
<div class="b" style="left:2353.7px;top:1162.5px;width:24.90000000000009px;height:2.5px;background:#1c2b33;"></div>
<div class="b" style="left:2645px;top:1162.5px;width:25px;height:2.5px;background:#1c2b33;"></div>
<div class="t" style="top:1246.8px;font-size:28px;line-height:28px;color:#1c2b33;letter-spacing:0.22px;left:315.3px;">Results from 8 ad sets</div>
<svg class="b" style="left:607px;top:1247px" width="26" height="26" viewBox="0 0 26 26"><circle cx="12.5" cy="12" r="12" fill="#1c2b33"/><circle cx="12.5" cy="6.5" r="1.9" fill="#fff"/><rect x="10.8" y="9.8" width="3.4" height="9.5" rx="1" fill="#fff"/></svg>
<div class="t" style="top:1246.8px;font-size:28px;line-height:28px;color:#1c2b33;letter-spacing:0.25px;right:1438.8px;">$4,474.77</div>
<div class="t" style="top:1286.7px;font-size:24px;line-height:24px;color:#67727b;letter-spacing:0.47px;right:1438.5px;">Total spent</div>
<div class="t" style="top:1246.8px;font-size:28px;line-height:28px;color:#1c2b33;letter-spacing:0.34px;right:1146.4px;">$27,950.01</div>
<div class="t" style="top:1286.7px;font-size:24px;line-height:24px;color:#67727b;letter-spacing:-0.13px;right:1146.8px;">Value, Purchase</div>
<div class="t" style="top:1246.8px;font-size:28px;line-height:28px;color:#1c2b33;letter-spacing:0.75px;right:854.9px;">6.25</div>
<div class="t" style="top:1286.7px;font-size:24px;line-height:24px;color:#67727b;letter-spacing:-0.22px;right:855.8px;">Average</div>
<div class="t" style="top:1246.8px;font-size:28px;line-height:28px;color:#1c2b33;letter-spacing:0.38px;right:562.6px;">128,596</div>
<div class="t" style="top:1286.7px;font-size:24px;line-height:24px;color:#67727b;letter-spacing:0.59px;right:562.4px;">Total</div>
<div class="t" style="top:1246.8px;font-size:28px;line-height:28px;color:#1c2b33;letter-spacing:0.38px;right:270.4px;">13,026</div>
<div class="t" style="top:1286.7px;font-size:24px;line-height:24px;color:#67727b;letter-spacing:0.06px;right:270.7px;">Accounts Center acco...</div>
<div class="b" style="left:2295px;top:1273px;width:89px;height:3px;background-image:linear-gradient(to right,#1c2b33 50%,transparent 50%);background-size:6px 3px;"></div>
<div class="t" style="top:1246.8px;font-size:28px;line-height:28px;color:#1c2b33;letter-spacing:1.18px;right:-21.2px;">9.87</div>
<div class="t" style="top:1286.7px;font-size:24px;line-height:24px;color:#67727b;letter-spacing:0.26px;left:2419.2px;">Per Accounts Center</div>
<div class="b" style="left:2652px;top:300px;width:2px;height:1129px;background:#e8eaed;"></div>
<div class="b" style="left:495px;top:1383px;width:1143px;height:14px;background:#c1c2c5;border-radius:7px;"></div>
</body></html>
